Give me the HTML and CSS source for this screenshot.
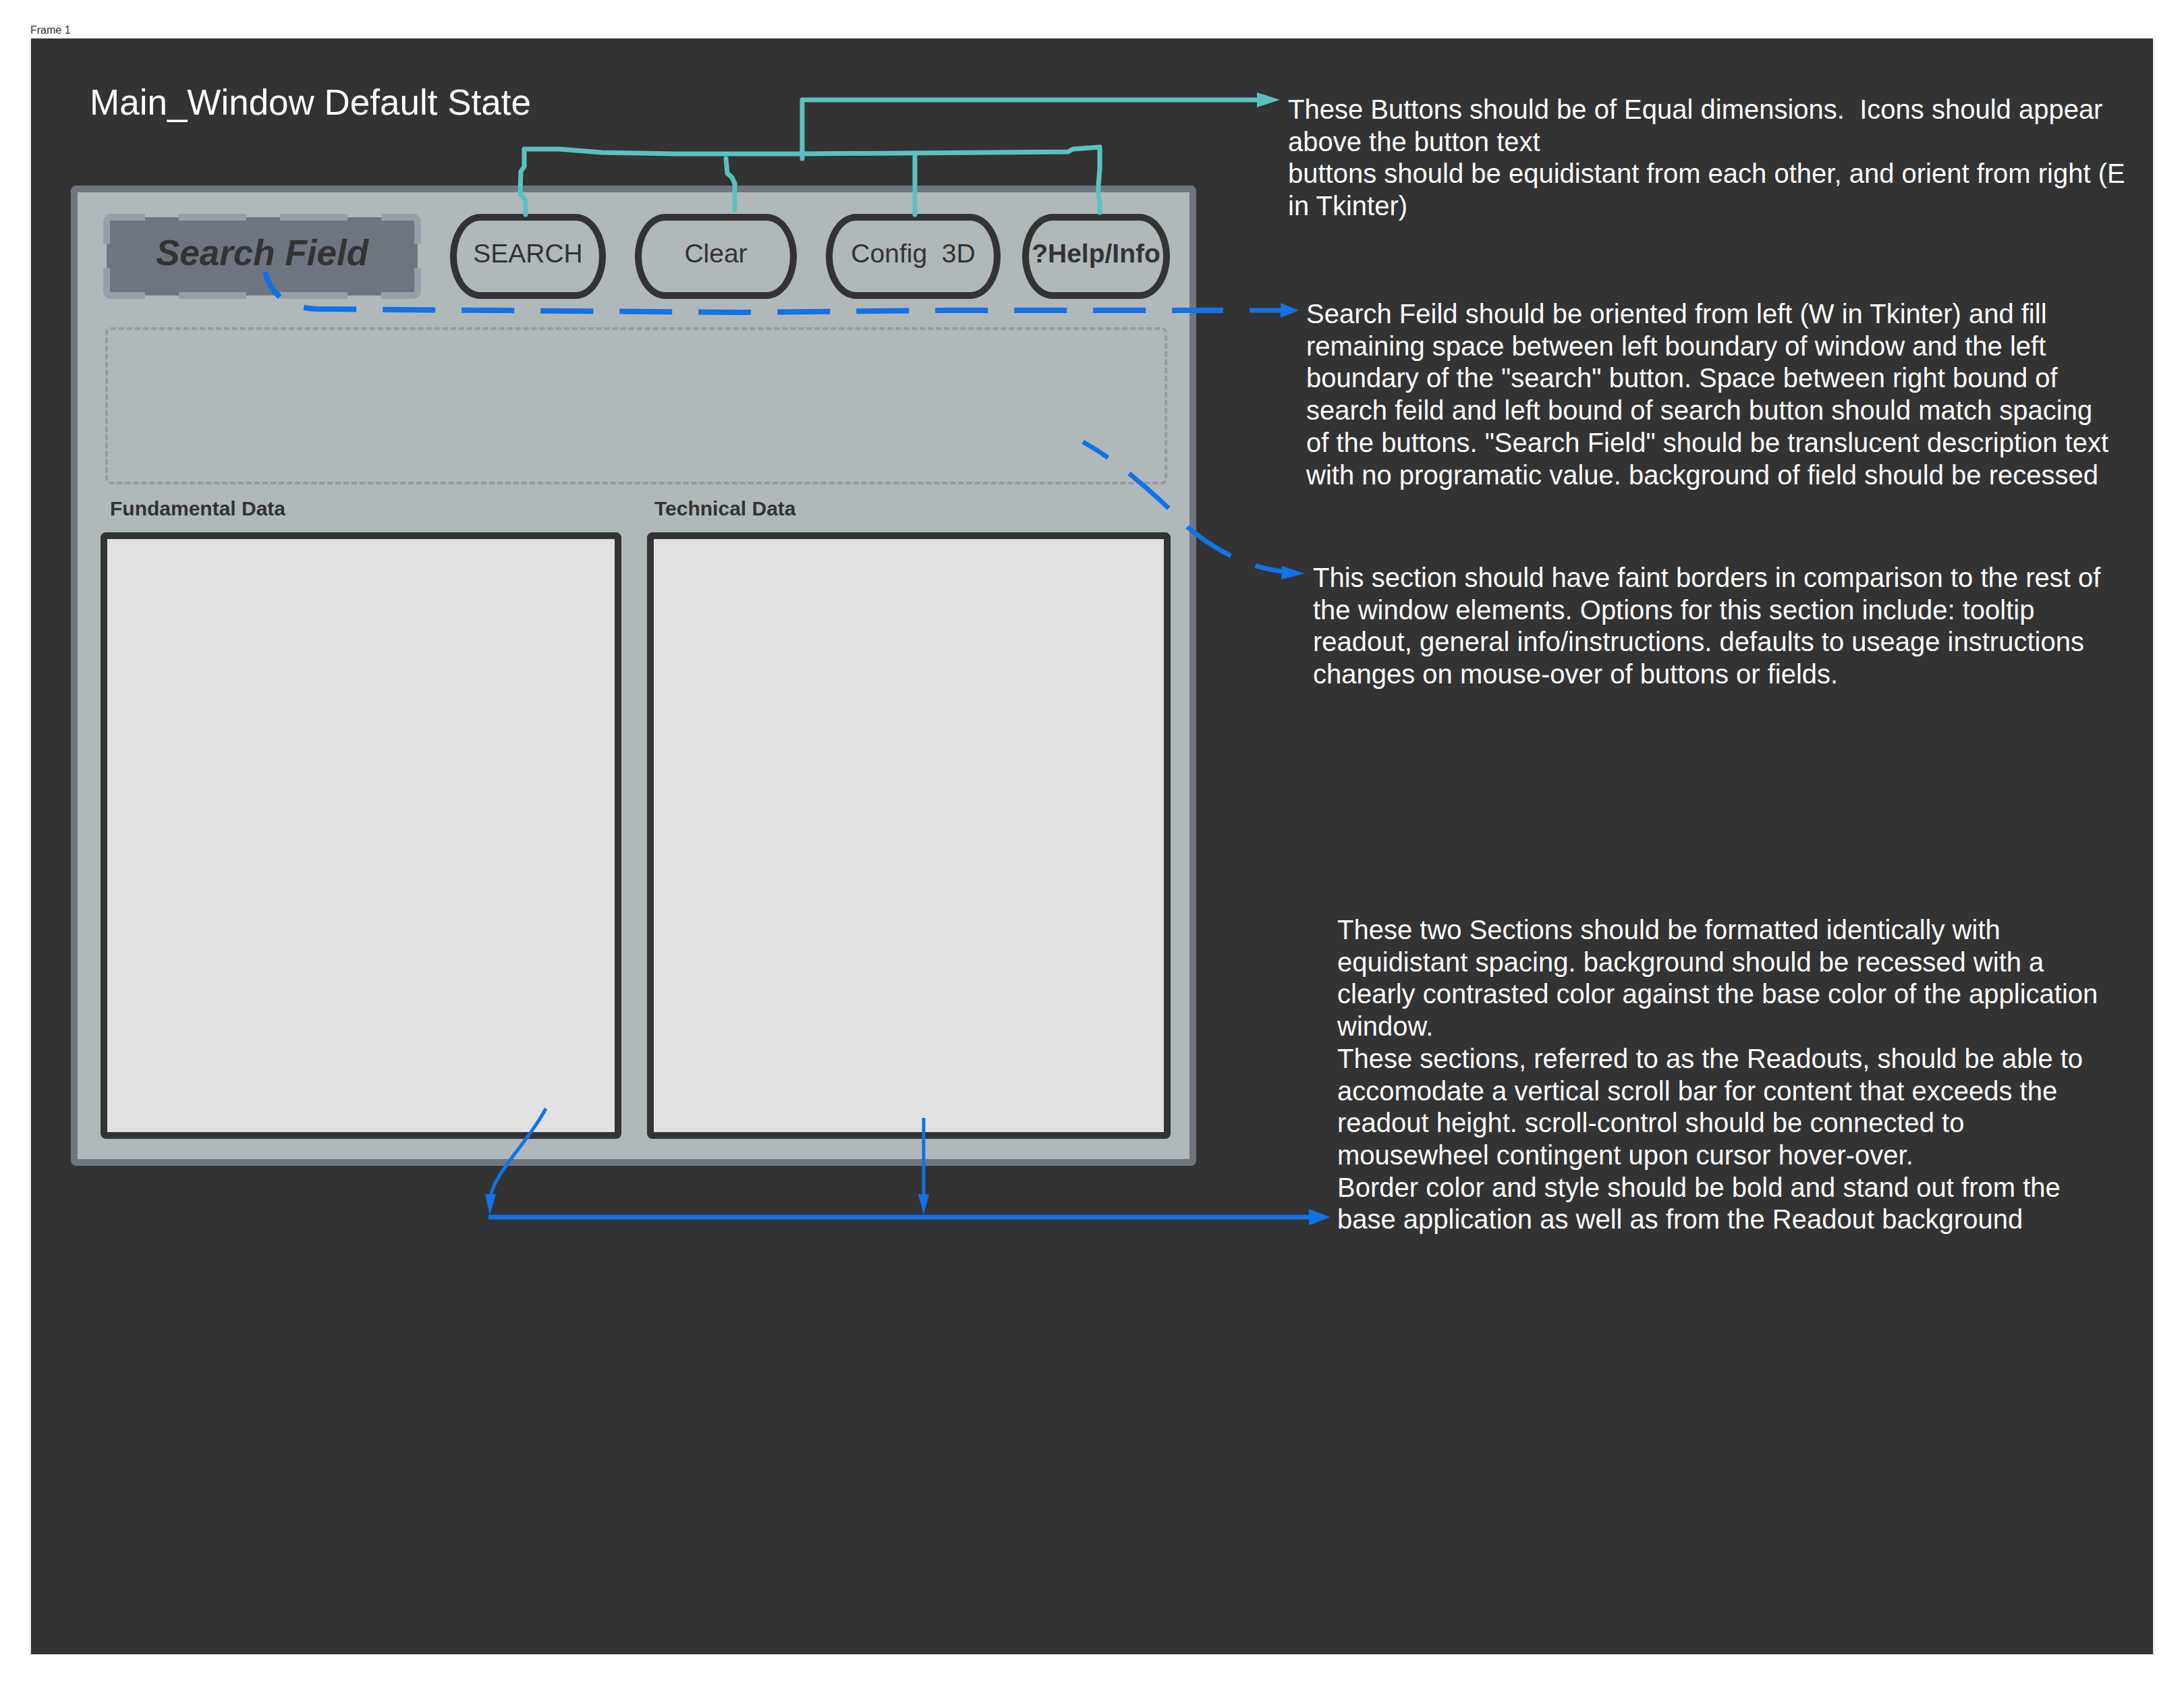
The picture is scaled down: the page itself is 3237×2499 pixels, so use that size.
FILE: index.html
```html
<!DOCTYPE html>
<html lang="en">
<head>
  <meta charset="UTF-8" />
  <meta name="viewport" content="width=device-width, initial-scale=1.0"/>
  <title>Main_Window Default State</title>
  <link rel="stylesheet" href="styles.css">
</head>
<body>
  <div class="frame-label">Frame 1</div>

  <div class="frame">
    <h1 class="frame-title">Main_Window Default State</h1>

    <div class="window">
      <div class="toolbar">
        <div class="search-field">Search Field</div>
        <button class="btn btn-search">SEARCH</button>
        <button class="btn btn-clear">Clear</button>
        <button class="btn btn-config">Config&nbsp;&nbsp;3D</button>
        <button class="btn btn-help">?Help/Info</button>
      </div>

      <div class="info-box"></div>

      <div class="readouts">
        <div class="readout">
          <div class="readout-label">Fundamental Data</div>
          <div class="readout-box"></div>
        </div>
        <div class="readout readout-right">
          <div class="readout-label">Technical Data</div>
          <div class="readout-box"></div>
        </div>
      </div>
    </div>

    <div class="note note-buttons">
      These Buttons should be of Equal dimensions.&nbsp; Icons should appear<br>
      above the button text<br>
      buttons should be equidistant from each other, and orient from right (E<br>
      in Tkinter)
    </div>

    <div class="note note-search">
      Search Feild should be oriented from left (W in Tkinter) and fill<br>
      remaining space between left boundary of window and the left<br>
      boundary of the "search" button. Space between right bound of<br>
      search feild and left bound of search button should match spacing<br>
      of the buttons. "Search Field" should be translucent description text<br>
      with no programatic value. background of field should be recessed
    </div>

    <div class="note note-info">
      This section should have faint borders in comparison to the rest of<br>
      the window elements. Options for this section include: tooltip<br>
      readout, general info/instructions. defaults to useage instructions<br>
      changes on mouse-over of buttons or fields.
    </div>

    <div class="note note-readouts">
      These two Sections should be formatted identically with<br>
      equidistant spacing. background should be recessed with a<br>
      clearly contrasted color against the base color of the application<br>
      window.<br>
      These sections, referred to as the Readouts, should be able to<br>
      accomodate a vertical scroll bar for content that exceeds the<br>
      readout height. scroll-control should be connected to<br>
      mousewheel contingent upon cursor hover-over.<br>
      Border color and style should be bold and stand out from the<br>
      base application as well as from the Readout background
    </div>

    <!-- connector lines, drawn in page coordinates -->
    <svg class="connectors" width="3145" height="2394" viewBox="46 57 3145 2394">
      <g class="teal">
        <path d="M1189,235 L1189,148 L1866,148"/>
        <path d="M777,221 L829,221 L892,226 L1000,228 L1189,228 L1583,225 L1590,221 L1630,218"/>
        <path d="M777,221 L777,247 L772,254 L771,287 L779,297 L779,318"/>
        <path d="M1076,235 L1078,257 L1085,263 L1089,272 L1089,311"/>
        <path d="M1356,228 L1356,318"/>
        <path d="M1630,218 L1630,250 L1628,275 L1628,290 L1630,298 L1630,315"/>
        <polygon points="1863,137 1897,148 1863,159"/>
      </g>
      <g class="blue">
        <path class="dashed" d="M393,403 Q405,455 470,458 L1100,463 L1400,460 L1813,460"/>
        <path d="M1852,460 L1902,460"/>
        <polygon points="1898,449 1925,460 1898,471"/>

        <path class="dashed thin" d="M1605,655 C1660,685 1720,740 1760,781 C1800,815 1850,842 1903,847"/>
        <polygon points="1900,839 1934,850 1899,859"/>

        <path class="fine" d="M809,1643 C785,1690 735,1735 727,1773"/>
        <polygon points="719,1770 735,1770 726,1802"/>
        <path d="M724,1804 L1944,1804"/>
        <polygon points="1940,1792 1972,1804 1940,1816"/>
        <path class="fine" d="M1369,1657 L1369,1772"/>
        <polygon points="1361,1770 1377,1770 1369,1801"/>
      </g>
    </svg>
  </div>
</body>
</html>
```

FILE: styles.css
```css
body {
  margin: 0;
  padding: 37px 0 0 45px;
  background: #fff;
  font-family: "Liberation Sans", Arial, sans-serif;
  color: #333;
}
.frame-label {
  font-size: 16px;
  line-height: 16px;
  margin-bottom: 4px;
  color: #333;
}
.frame {
  position: relative;
  width: 3145px;
  height: 2395px;
  margin-left: 1px;
  padding: 68px 0 0 59px;
  box-sizing: border-box;
  background: #333;
  box-shadow: 0 2px 4px rgba(0, 0, 0, 0.25);
}
.frame-title {
  margin: 0 0 97px 28px;
  font-size: 53px;
  line-height: 53px;
  font-weight: normal;
  color: #fff;
}

/* app window mock */
.window {
  width: 1668px;
  box-sizing: border-box;
  padding-top: 32px;
  padding-bottom: 30px;
  background: #b1b8ba;
  border: 10px solid #6f7680;
  border-radius: 8px;
}
.toolbar {
  display: flex;
  align-items: center;
  margin-left: 38px;
  height: 126px;
}
/* dashed 10px stroke centred on the edge of a recessed fill */
.search-field {
  width: 471px;
  height: 126px;
  margin-right: 43px;
  box-sizing: border-box;
  border: 5px solid transparent;
  padding-bottom: 11px;
  display: flex;
  align-items: center;
  justify-content: center;
  border-radius: 12px;
  font-size: 53px;
  font-weight: bold;
  font-style: italic;
  color: #333;
  background-image:
    linear-gradient(90deg, #979ea7 0 62px, transparent 62px 112px, #979ea7 112px 212px, transparent 212px 262px, #979ea7 262px 362px, transparent 362px 412px, #979ea7 412px),
    linear-gradient(90deg, #979ea7 0 62px, transparent 62px 112px, #979ea7 112px 212px, transparent 212px 262px, #979ea7 262px 362px, transparent 362px 412px, #979ea7 412px),
    linear-gradient(180deg, #979ea7 0 45px, transparent 45px 80px, #979ea7 80px),
    linear-gradient(180deg, #979ea7 0 45px, transparent 45px 80px, #979ea7 80px),
    linear-gradient(#6e7580, #6e7580);
  background-position: top, bottom, left, right, center;
  background-size: 100% 10px, 100% 10px, 10px 100%, 10px 100%, 100% 100%;
  background-repeat: no-repeat;
  background-origin: border-box;
  background-clip: border-box, border-box, border-box, border-box, padding-box;
}
.btn {
  height: 126px;
  box-sizing: border-box;
  padding: 0 0 9px;
  margin-right: 43px;
  background: transparent;
  border: 10px solid #333;
  border-radius: 45px / 63px;
  font-family: "Liberation Sans", Arial, sans-serif;
  font-size: 39px;
  color: #333;
  white-space: nowrap;
}
.btn-search { width: 231px; }
.btn-clear { width: 240px; }
.btn-config { width: 259px; margin-right: 32px; }
.btn-help { width: 219px; margin-right: 0; font-weight: bold; }

.info-box {
  position: relative;
  height: 233px;
  margin: 42px 33px 0 41px;
}
.info-box::before {
  content: "";
  position: absolute;
  inset: 0;
  border-radius: 8px;
  border: 4px dashed #979ca5;
}

.readouts {
  display: grid;
  grid-template-columns: 772px 776px;
  column-gap: 38px;
  margin: 21px 0 0 34px;
}
.readout-label {
  font-size: 30px;
  line-height: 30px;
  font-weight: bold;
  color: #333;
  padding-left: 14px;
  margin-bottom: 20px;
}
.readout-right .readout-label {
  padding-left: 11px;
}
.readout-box {
  height: 899px;
  box-sizing: border-box;
  background: #e1e1e1;
  border: 10px solid #333;
  border-radius: 8px;
}

/* annotations on the canvas */
.note {
  position: absolute;
  font-size: 40px;
  line-height: 47.7px;
  color: #fff;
  white-space: nowrap;
}
.note-buttons { left: 1863px; top: 82px; }
.note-search { left: 1890px; top: 385px; }
.note-info { left: 1900px; top: 776px; }
.note-readouts { left: 1936px; top: 1298px; }

.connectors {
  position: absolute;
  left: 0;
  top: 0;
  pointer-events: none;
}
.connectors path {
  fill: none;
  stroke-linecap: butt;
  stroke-linejoin: round;
}
.teal path {
  stroke: #5bc1be;
  stroke-width: 7;
  stroke-linecap: round;
}
.teal polygon { fill: #5bc1be; }
.blue path {
  stroke: #1272e6;
  stroke-width: 7;
}
.blue polygon { fill: #1272e6; }
.blue .dashed {
  stroke-width: 8;
  stroke-dasharray: 78 39;
  stroke-dashoffset: 34;
}
.blue .thin { stroke-width: 7; }
.blue .fine { stroke-width: 5; }
```
